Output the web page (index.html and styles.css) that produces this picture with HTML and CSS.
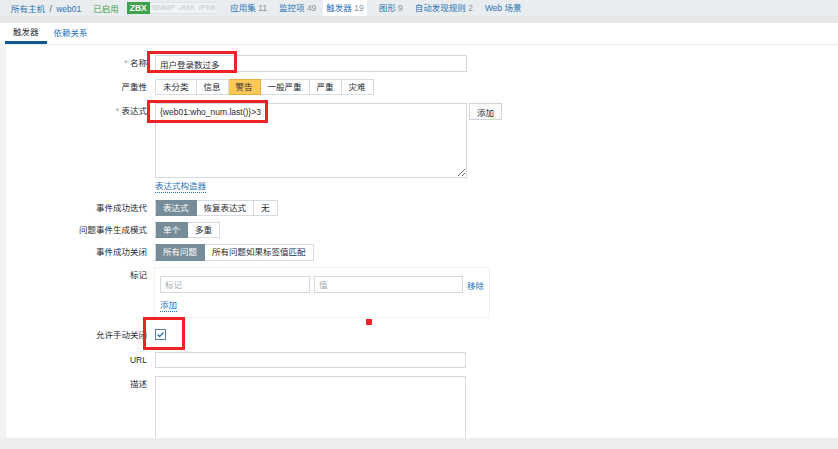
FILE: index.html
```html
<!DOCTYPE html>
<html lang="zh">
<head>
  <meta charset="UTF-8">
  <title>触发器</title>
  <link rel="stylesheet" href="styles.css">
</head>
<body>
  <nav class="topnav">
    <span class="crumbs"><a href="#">所有主机</a> <span class="sep">/</span> <a href="#">web01</a></span>
    <span class="status">已启用</span>
    <span class="avail"><span class="zbx">ZBX</span><span class="off">SNMP</span><span class="off">JMX</span><span class="off">IPMI</span></span>
    <a class="navitem" href="#">应用集 <em>11</em></a>
    <a class="navitem" href="#">监控项 <em>49</em></a>
    <a class="navitem active" href="#">触发器 <em>19</em></a>
    <a class="navitem" href="#">图形 <em>9</em></a>
    <a class="navitem" href="#">自动发现规则 <em>2</em></a>
    <a class="navitem" href="#">Web 场景</a>
  </nav>
  <div class="band"></div>

  <div class="page">
    <div class="tabs">
      <span class="tab active">触发器</span>
      <a class="tab" href="#">依赖关系</a>
    </div>

    <form class="form">
      <div class="row r-name">
        <label class="lbl"><i>*</i> 名称</label>
        <input class="field wide" type="text" value="用户登录数过多">
      </div>

      <div class="row r-sev">
        <label class="lbl">严重性</label>
        <div class="seg">
          <span>未分类</span><span>信息</span><span class="warn">警告</span><span>一般严重</span><span>严重</span><span>灾难</span>
        </div>
      </div>

      <div class="row r-expr">
        <label class="lbl"><i>*</i> 表达式</label>
        <textarea class="area expr">{web01:who_num.last()}>3</textarea>
        <button type="button" class="btn-add">添加</button>
      </div>

      <div class="row r-link">
        <span class="lbl"></span>
        <a class="dotted" href="#">表达式构造器</a>
      </div>

      <div class="row r-seg">
        <label class="lbl">事件成功迭代</label>
        <div class="seg">
          <span class="on">表达式</span><span>恢复表达式</span><span>无</span>
        </div>
      </div>

      <div class="row r-seg">
        <label class="lbl">问题事件生成模式</label>
        <div class="seg">
          <span class="on">单个</span><span>多重</span>
        </div>
      </div>

      <div class="row r-seg r-close">
        <label class="lbl">事件成功关闭</label>
        <div class="seg">
          <span class="on">所有问题</span><span>所有问题如果标签值匹配</span>
        </div>
      </div>

      <div class="row r-tags">
        <label class="lbl">标记</label>
        <div class="tagbox">
          <div class="tagline">
            <input class="field tag" type="text" placeholder="标记">
            <input class="field tag" type="text" placeholder="值">
            <a class="remove" href="#">移除</a>
          </div>
          <a class="tagadd" href="#">添加</a>
        </div>
      </div>

      <div class="row r-check">
        <label class="lbl">允许手动关闭</label>
        <span class="check">
          <svg width="11" height="11" viewBox="0 0 11 11"><rect x="0.5" y="0.5" width="10" height="10" fill="#fff" stroke="#5a7d99"/><path d="M2.6 5.6 L4.6 7.5 L8.5 3.4" fill="none" stroke="#2f77b8" stroke-width="1.4"/></svg>
        </span>
      </div>

      <div class="row r-url">
        <label class="lbl">URL</label>
        <input class="field wide" type="text">
      </div>

      <div class="row r-desc">
        <label class="lbl">描述</label>
        <textarea class="area desc"></textarea>
      </div>
    </form>
  </div>

  <!-- annotation marks drawn over the screenshot -->
  <div class="mark m-name"></div>
  <div class="mark m-expr"></div>
  <div class="mark m-check"></div>
  <div class="dot"></div>
</body>
</html>
```

FILE: styles.css
```css
body {
  margin: 0;
  background: #eeeeee;
  color: #1f2c33;
  font-family: "Liberation Sans", "Noto Sans CJK SC", sans-serif;
  font-size: 8.5px;
  position: relative;
  height: 449px;
  overflow: hidden;
}

a {
  color: #2a74b5;
  text-decoration: none;
}

.topnav {
  height: 16px;
  background: #e9edf0;
  display: flex;
  align-items: center;
  padding-left: 11px;
  white-space: nowrap;
}

.crumbs .sep {
  color: #555;
  margin: 0 2px;
}

.status {
  color: #429e47;
  margin-left: 12px;
}

.avail {
  display: flex;
  margin-left: 8px;
  height: 12px;
  align-items: stretch;
}

.zbx {
  background: #3fa34d;
  color: #fff;
  font-weight: bold;
  padding: 0 3px;
  line-height: 12px;
}

.off {
  color: #c3cacd;
  background: #f0f3f4;
  border-top: 1px solid #dde3e6;
  border-bottom: 1px solid #dde3e6;
  padding: 0 2px;
  line-height: 10px;
  font-size: 8px;
}

.off:last-child {
  border-right: 1px solid #dde3e6;
}

.navitem {
  margin-left: 12px;
  height: 16px;
  line-height: 16px;
}

.navitem em {
  font-style: normal;
  color: #8a969c;
}

.navitem.active {
  background: #fff;
  padding: 0 3px;
  margin-left: 7px;
}

.band {
  height: 7px;
  background: #e6e6e6;
}

.page {
  background: #fff;
  height: 415px;
  overflow: hidden;
}

.tabs {
  height: 21px;
  border-bottom: 1px solid #ebebeb;
  display: flex;
  padding-left: 5px;
}

.tab {
  padding: 0 8px;
  line-height: 20px;
  white-space: nowrap;
}

.tab.active {
  color: #1f2c33;
  border-bottom: 3px solid #0e5a8c;
  line-height: 18px;
}

.tab + .tab {
  padding-left: 7px;
}

.form {
  border-left: 6px solid #f2f2f2;
  padding-top: 10px;
  height: 400px;
  margin: 0;
}

.row {
  display: flex;
  align-items: flex-start;
  margin-bottom: 7px;
}

.lbl {
  width: 149px;
  flex: none;
  box-sizing: border-box;
  padding-right: 8px;
  text-align: right;
  line-height: 17px;
  white-space: nowrap;
}

.lbl i {
  font-style: normal;
  color: #999;
}

.field {
  box-sizing: border-box;
  height: 17px;
  border: 1px solid #d3d9dd;
  padding: 0 4px;
  font: inherit;
  color: #1f2c33;
  background: #fff;
  outline: none;
}

.field::placeholder {
  color: #a3adb2;
}

.wide {
  width: 312px;
}

.seg {
  display: flex;
  height: 16px;
}

.seg span {
  border: 1px solid #d6dcdf;
  border-left: none;
  padding: 0 7px;
  line-height: 14px;
  background: #fff;
}

.seg span:first-child {
  border-left: 1px solid #d6dcdf;
}

.seg .warn {
  background: #ffc859;
  border-color: #e8ad42;
}

.seg .on {
  background: #768d99;
  border-color: #768d99;
  color: #fff;
}

.r-expr {
  margin-bottom: 3px;
}

.area {
  box-sizing: border-box;
  width: 312px;
  border: 1px solid #d3d9dd;
  font: inherit;
  color: #1f2c33;
  padding: 3px 4px;
  outline: none;
  margin: 0;
}

.expr {
  height: 75px;
}

.btn-add {
  margin-left: 2px;
  width: 33px;
  height: 17px;
  padding: 0;
  border: 1px solid #cfd5d9;
  background: #fafafa;
  font: inherit;
  color: #1f2c33;
}

.r-link,
.r-link .lbl {
  line-height: 13px;
}

.dotted {
  border-bottom: 1px dotted #2a74b5;
  line-height: 11px;
}

.r-seg {
  margin-bottom: 6px;
}

.r-seg .lbl {
  line-height: 16px;
}

.r-close .seg {
  height: 17px;
}

.r-close .seg span {
  line-height: 15px;
}

.tagbox {
  margin-left: -1px;
  width: 336px;
  box-sizing: border-box;
  border: 1px solid #eef0f2;
  padding: 8px 4px 5px 5px;
}

.tagline {
  display: flex;
  align-items: center;
  gap: 4px;
}

.tag {
  width: 150px;
}

.tag + .tag {
  width: 149px;
}

.remove {
  white-space: nowrap;
}

.tagadd {
  display: inline-block;
  margin-top: 6px;
  line-height: 12px;
  border-bottom: 1px dotted #2a74b5;
}

.r-tags {
  margin-bottom: 11px;
}

.r-check {
  margin-bottom: 11px;
}

.r-check .lbl {
  line-height: 12px;
}

.check {
  display: block;
  height: 12px;
  line-height: 0;
}

.r-url .field {
  height: 16px;
  width: 311px;
}

.r-desc .lbl {
  line-height: 16px;
}

.desc {
  width: 311px;
  height: 90px;
}

.mark {
  position: absolute;
  border: 3px solid #ec2227;
  box-sizing: border-box;
}

.m-name {
  left: 147px;
  top: 51px;
  width: 90px;
  height: 22px;
}

.m-expr {
  left: 147px;
  top: 100px;
  width: 121px;
  height: 23px;
}

.m-check {
  left: 143px;
  top: 317px;
  width: 42px;
  height: 33px;
}

.dot {
  position: absolute;
  left: 366px;
  top: 319px;
  width: 6px;
  height: 6px;
  background: #ec2227;
}
```
